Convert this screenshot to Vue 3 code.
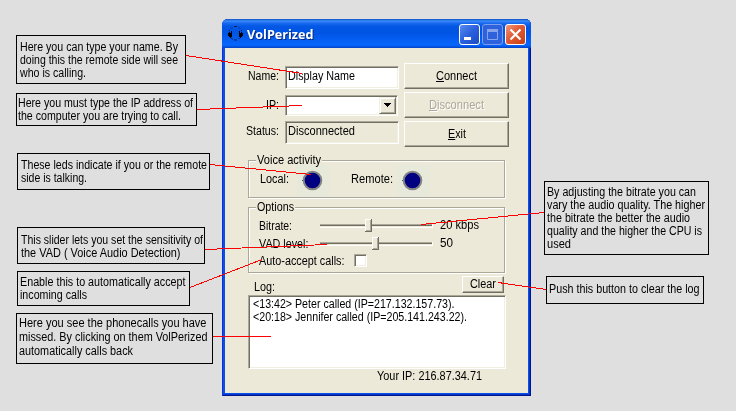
<script setup>
const callouts = [
  { x: 16, y: 35, w: 170, h: 49, top: 4, left: 3, lines: [['Here you can type your name. By', 158], ['doing this the remote side will see', 158], ['who is calling.', 66]] },
  { x: 16, y: 93, w: 181, h: 33, top: 2, left: 1, lines: [['Here you must type the IP address of', 175], ['the computer you are trying to call.', 163]] },
  { x: 17, y: 153, w: 193, h: 37, top: 4, left: 3, lines: [['These leds indicate if you or the remote', 186], ['side is talking.', 66]] },
  { x: 17, y: 227, w: 188, h: 37, top: 5, left: 3, lines: [['This slider lets you set the sensitivity of', 182], ['the VAD ( Voice Audio Detection)', 159.5]] },
  { x: 17, y: 271, w: 173, h: 35, top: 3, left: 2, lines: [['Enable this to automatically accept', 165.5], ['incoming calls', 67]] },
  { x: 16, y: 313, w: 197, h: 51, top: 2, left: 2, loose: true, lines: [['Here you see the phonecalls you have', 187.5], ['missed. By clicking on them VolPerized', 188.5], ['automatically calls back', 114]] },
  { x: 544, y: 181, w: 165, h: 74, top: 3, left: 2, lines: [['By adjusting the bitrate you can', 149], ['vary the audio quality. The higher', 158], ['the bitrate the better the audio', 143], ['quality and the higher the CPU is', 155], ['used', 24]] },
  { x: 546, y: 276, w: 158, h: 28, top: 5, left: 2, lines: [['Push this button to clear the log', 150.5]] },
]

const pointers = [
  [186, 55, 302, 73],
  [197, 109, 302, 105],
  [210, 164, 311, 174],
  [205, 249, 327, 244],
  [190, 287, 262, 259],
  [213, 336, 271, 336],
  [544, 212, 421, 224],
  [546, 289, 498, 282],
]

const sliders = [
  { label: 'Bitrate:', labelWidth: 33, thumb: 45, value: '20 kbps', valueWidth: 39 },
  { label: 'VAD level:', labelWidth: 49.5, thumb: 52, value: '50', valueWidth: 13 },
]

const calls = [
  ['<13:42> Peter called (IP=217.132.157.73).', 201.5],
  ['<20:18> Jennifer called (IP=205.141.243.22).', 214],
]

// Condenses a run of text so that it fills the given width.
const vFit = {
  mounted(el, { value }) {
    const natural = el.getBoundingClientRect().width
    el.style.transform = `scaleX(${value / natural})`
    el.style.marginRight = `${value - natural}px`
  },
}
</script>

<template>
  <div class="canvas">
    <section
      v-for="c in callouts"
      :key="c.y"
      class="callout"
      :class="{ loose: c.loose }"
      :style="{ left: c.x + 'px', top: c.y + 'px', width: c.w + 'px', height: c.h + 'px', paddingTop: c.top + 'px', paddingLeft: c.left + 'px' }"
    >
      <div v-for="[text, width] in c.lines" :key="text" class="line">
        <span v-fit="width" class="t">{{ text }}</span>
      </div>
    </section>

    <main class="window">
      <header class="titlebar">
        <svg class="app-icon" width="16" height="16" viewBox="0 0 16 16">
          <path d="M2.5 5V4M4 2.5l1-1M7 .5h3M12 1.5l1 1M14.5 4v1" fill="none" stroke="#061a4a" stroke-width="1" />
          <path d="M4.500 12l1 1.500M7 14h3M11.500 13l1-1" fill="none" stroke="#061a4a" stroke-width="1" />
          <path d="M2 6h1v1h1V5h1v6H4v1H3v-1H2v-1H1V7h1zM12 5h1v2h1V6h1v1h1v3h-1v1h-1v1h-1v-1h-1z" fill="#000" />
        </svg>
        <span v-fit="66.5" class="t title">VolPerized</span>
        <div class="controls">
          <svg class="ctl" width="21" height="21" viewBox="0 0 21 21">
            <defs>
              <linearGradient id="blue" x1="0" y1="0" x2="1" y2="1">
                <stop offset="0" stop-color="#5a8df0" /><stop offset=".5" stop-color="#2a5fdc" /><stop offset="1" stop-color="#1b49c4" />
              </linearGradient>
              <linearGradient id="red" x1="0" y1="0" x2="1" y2="1">
                <stop offset="0" stop-color="#f09a80" /><stop offset=".45" stop-color="#e25a35" /><stop offset="1" stop-color="#c63c12" />
              </linearGradient>
            </defs>
            <rect x=".5" y=".5" width="20" height="20" rx="2.5" fill="url(#blue)" stroke="#fff" />
            <path d="M5 13h7v3H5z" fill="#fff" />
          </svg>
          <svg class="ctl" width="21" height="21" viewBox="0 0 21 21">
            <rect x=".5" y=".5" width="20" height="20" rx="2.5" fill="#2d62dc" stroke="#7c9fee" />
            <path d="M5.5 6.5h10v9h-10z" fill="none" stroke="#86a3ec" />
            <path d="M5 5h11v3H5z" fill="#86a3ec" />
          </svg>
          <svg class="ctl" width="21" height="21" viewBox="0 0 21 21">
            <rect x=".5" y=".5" width="20" height="20" rx="2.5" fill="url(#red)" stroke="#fff" />
            <path d="M5.5 5.5l10 10M15.5 5.5l-10 10" stroke="#fff" stroke-width="2.2" />
          </svg>
        </div>
      </header>

      <div class="client">
        <div class="form">
          <div class="fields">
            <label class="label"><span v-fit="31" class="t">Name:</span></label>
            <div class="sunken white name"><span v-fit="67" class="t">Display Name</span></div>
            <label class="label"><span v-fit="13" class="t">IP:</span></label>
            <div class="sunken white combo">
              <div class="drop">
                <svg width="7" height="4" viewBox="0 0 7 4" shape-rendering="crispEdges"><path d="M0 0h7v1H6v1H5v1H4v1H3V3H2V2H1V1H0z" /></svg>
              </div>
            </div>
            <label class="label"><span v-fit="33" class="t">Status:</span></label>
            <div class="sunken status"><span v-fit="67" class="t">Disconnected</span></div>
          </div>
          <div class="buttons">
            <div class="button"><span v-fit="41" class="t"><u>C</u>onnect</span></div>
            <div class="button disabled"><span v-fit="55" class="t"><u>D</u>isconnect</span></div>
            <div class="button"><span v-fit="18" class="t"><u>E</u>xit</span></div>
          </div>
        </div>

        <section class="group voice">
          <h2 class="legend"><span v-fit="64" class="t">Voice activity</span></h2>
          <div class="leds">
            <span class="led-label"><span v-fit="29" class="t">Local:</span></span>
            <svg class="led" width="32" height="32" viewBox="0 0 32 32"><circle cx="15.5" cy="15.5" r="8.8" fill="#000080" stroke="#848484" stroke-width="2" /><path d="M5 15h1v1H5z" fill="#008080" /></svg>
            <span class="led-label"><span v-fit="42" class="t">Remote:</span></span>
            <svg class="led" width="32" height="32" viewBox="0 0 32 32"><circle cx="15.5" cy="15.5" r="8.8" fill="#000080" stroke="#848484" stroke-width="2" /><path d="M5 15h1v1H5z" fill="#008080" /></svg>
          </div>
        </section>

        <section class="group options">
          <h2 class="legend"><span v-fit="37" class="t">Options</span></h2>
          <div v-for="s in sliders" :key="s.label" class="option">
            <span class="option-label"><span v-fit="s.labelWidth" class="t">{{ s.label }}</span></span>
            <svg class="slider" width="113" height="16" viewBox="0 0 113 16" shape-rendering="crispEdges">
              <path d="M0 6h113v4H0z" fill="#fff" />
              <path d="M0 6h112v1H0z" fill="#aca899" />
              <path d="M0 7h112v1H0z" fill="#716f64" />
              <path d="M0 8h112v1H0z" fill="#ece9d8" />
              <g :transform="`translate(${s.thumb} 1)`">
                <path d="M0 0h7v13H0z" fill="#716f64" />
                <path d="M0 0h6v12H0z" fill="#fff" />
                <path d="M1 1h5v11H1z" fill="#aca899" />
                <path d="M1 1h4v10H1z" fill="#ece9d8" />
              </g>
            </svg>
            <span v-fit="s.valueWidth" class="t">{{ s.value }}</span>
          </div>
          <div class="option">
            <span class="option-label wide"><span v-fit="85.5" class="t">Auto-accept calls:</span></span>
            <span class="sunken white check"></span>
          </div>
        </section>

        <div class="log-head">
          <span v-fit="21" class="t">Log:</span>
          <div class="button small"><span v-fit="26" class="t">Clear</span></div>
        </div>
        <div class="sunken white log">
          <div v-for="[text, width] in calls" :key="text" class="line">
            <span v-fit="width" class="t">{{ text }}</span>
          </div>
        </div>
        <footer class="own-ip"><span v-fit="105" class="t">Your IP: 216.87.34.71</span></footer>
      </div>
    </main>

    <svg class="pointers" width="736" height="411" viewBox="0 0 736 411" shape-rendering="crispEdges">
      <line v-for="p in pointers" :key="p[1]" :x1="p[0]" :y1="p[1] + 0.5" :x2="p[2]" :y2="p[3] + 0.5" stroke="#f00" />
    </svg>
  </div>
</template>

<style>
body {
  margin: 0;
}
</style>

<style scoped>
* {
  box-sizing: border-box;
}
.canvas {
  position: relative;
  width: 736px;
  height: 411px;
  overflow: hidden;
  background: #dfdfdf;
  color: #000;
  font: 12px/14px 'Liberation Sans', Arial, sans-serif;
}
.t {
  display: inline-block;
  white-space: pre;
  transform-origin: 0 0;
}
.callout {
  position: absolute;
  border: 1px solid #000;
}
.line {
  height: 13px;
  white-space: nowrap;
}
.loose .line {
  height: 14px;
}
.pointers {
  position: absolute;
  left: 0;
  top: 0;
}
.window {
  position: absolute;
  left: 222px;
  top: 19px;
  width: 309px;
  height: 377px;
  display: flex;
  flex-direction: column;
  padding: 0 3px 3px;
  border-radius: 6px 6px 0 0;
  background: #0a4fe6;
  box-shadow: inset 1px 0 #0831d9, inset 0 -1px #001590, inset -1px 0 #001590, inset 0 -2px #0433c8, inset -2px 0 #0433c8;
}
.titlebar {
  display: flex;
  flex: none;
  height: 29px;
  margin: 0 -3px;
  padding: 0 5px 0 5px;
  border-radius: 6px 6px 0 0;
  background: linear-gradient(#0a50c8 0, #3c8cf8 2px, #1a6cf0 4px, #0458e4 7px, #0054e3 14px, #0560f5 22px, #0666fd 26px, #0450dc 28px, #0340c0 29px);
}
.app-icon {
  margin-top: 7px;
  width: 16px;
  flex: none;
}
.title {
  margin: 7px 0 0 4px;
  color: #fff;
  font: bold 13px/17px 'Open Sans', 'Noto Sans', sans-serif;
  text-shadow: 1px 1px #0a2a80;
}
.controls {
  display: flex;
  gap: 2px;
  margin: 5px 0 0 auto;
}
.client {
  flex: 1;
  padding-top: 15px;
  background: #ece9d8;
}
.form {
  display: flex;
  gap: 5px;
}
.fields {
  display: grid;
  grid-template-columns: 60px 114px;
  grid-template-rows: 23px 21px 23px;
  row-gap: 5.5px;
  padding-top: 3px;
}
.label {
  padding: 3px 6px 0 0;
  text-align: right;
}
.sunken {
  border: 1px solid;
  border-color: #aca899 #fff #fff #aca899;
  box-shadow: inset 1px 1px #716f64, inset -1px -1px #f1efe2;
}
.white {
  background: #fff;
}
.name {
  padding: 2px 0 0 2px;
}
.status {
  padding: 2px 0 0 2px;
}
.combo {
  display: flex;
  justify-content: flex-end;
  width: 113px;
  padding: 1px;
}
.drop {
  display: flex;
  align-items: center;
  justify-content: center;
  width: 17px;
  border: 1px solid;
  border-color: #f1efe2 #716f64 #716f64 #f1efe2;
  box-shadow: inset 1px 1px #fff, inset -1px -1px #aca899;
  background: #ece9d8;
}
.buttons {
  display: flex;
  flex-direction: column;
  gap: 3px;
}
.button {
  width: 105px;
  height: 26px;
  padding-top: 5px;
  border: 1px solid;
  border-color: #fff #716f64 #716f64 #fff;
  box-shadow: inset -1px -1px #aca899;
  text-align: center;
}
.button u {
  text-underline-offset: 1px;
}
.disabled {
  color: #aca899;
  text-shadow: 1px 1px #fff;
}
.group {
  width: 257px;
  margin-left: 23px;
  border: 1px solid #aca899;
  box-shadow: inset 1px 1px #fff, 1px 1px #fff;
}
.voice {
  height: 38px;
  margin-top: 13px;
}
.options {
  height: 66px;
  margin-top: 9px;
}
.legend {
  width: fit-content;
  height: 14px;
  margin: -8px 0 0 7px;
  padding: 0 1px;
  background: #ece9d8;
  font: inherit;
}
.leds {
  display: grid;
  grid-template-columns: 37px 54px 46px 32px;
  margin: -2px 0 0 11px;
}
.led-label {
  padding-top: 7px;
}
.led {
  background: #e7eada;
}
.options .legend {
  margin-bottom: 4px;
}
.option {
  display: flex;
  height: 18px;
  padding-left: 10px;
}
.option-label {
  width: 61px;
  padding-top: 1px;
}
.option-label.wide {
  width: 95px;
  padding-top: 0;
}
.slider {
  margin-right: 7px;
}
.check {
  width: 13px;
  height: 13px;
}
.log-head {
  display: flex;
  justify-content: space-between;
  height: 22px;
  padding: 7px 24px 0 29px;
}
.button.small {
  width: 42px;
  height: 17px;
  margin-top: -4px;
  padding-top: 0;
}
.log {
  width: 258px;
  height: 74px;
  margin-left: 23px;
  padding: 1px 0 0 4px;
}
.own-ip {
  padding: 0 0 0 152px;
}
</style>
